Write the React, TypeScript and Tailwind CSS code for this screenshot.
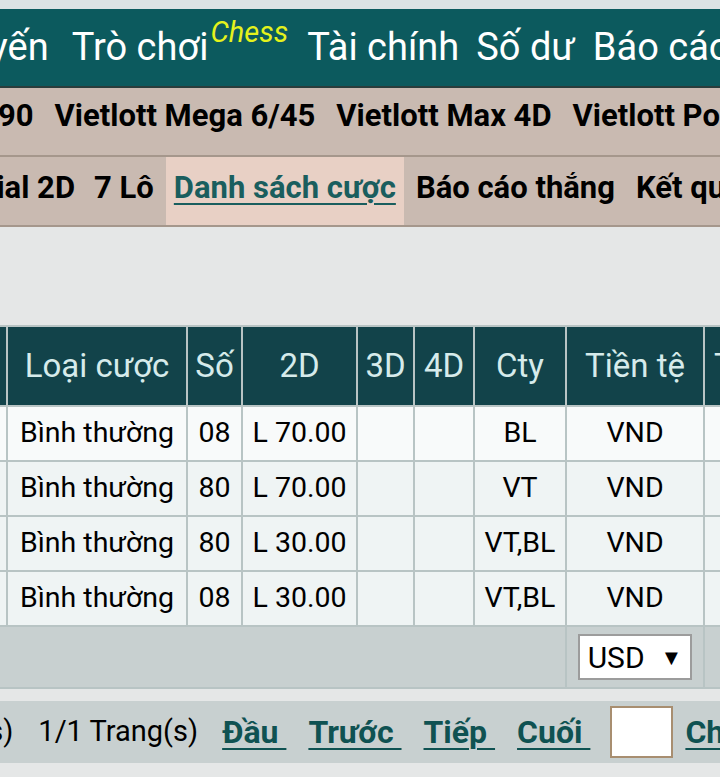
import React from "react";

const rows = [
  { type: "Bình thường", num: "08", d2: "L 70.00", cty: "BL", cur: "VND" },
  { type: "Bình thường", num: "80", d2: "L 70.00", cty: "VT", cur: "VND" },
  { type: "Bình thường", num: "80", d2: "L 30.00", cty: "VT,BL", cur: "VND" },
  { type: "Bình thường", num: "08", d2: "L 30.00", cty: "VT,BL", cur: "VND" },
];

const cell = "border-2 border-[#b8c4c4] text-center p-0 whitespace-nowrap";
const head = cell + " font-normal";
const link = "font-bold text-[#0f5252] text-[32px] underline decoration-2 underline-offset-[5px]";

export default function App() {
  return (
    <div
      className="w-[720px] h-[777px] overflow-hidden bg-[#e5e7e7] text-black"
      style={{ fontFamily: "Roboto, 'Noto Sans', sans-serif" }}
    >
      <div className="h-[9px] bg-[#dce3e4]" />
      {/* main menu */}
      <nav className="h-[79px] bg-[#0c5a5e] border-b-2 border-[#2a3d3c] flex items-center whitespace-nowrap text-white text-[38px] overflow-hidden">
        <span className="ml-[-52px]">Tuyến</span>
        <span className="ml-[23px]">
          Trò chơi
          <span className="relative top-[-18px] ml-[2px] text-[#e5f21c] italic text-[29px]">Chess</span>
        </span>
        <span className="ml-[19px]">Tài chính</span>
        <span className="ml-[17px]">Số dư</span>
        <span className="ml-[18px]">Báo cáo</span>
      </nav>
      {/* lottery types */}
      <div className="h-[69px] pb-[10px] bg-[#c9bab1] border-b-2 border-[#a5978c] flex items-center whitespace-nowrap font-bold text-[31px] gap-[21px] overflow-hidden">
        <span className="ml-[-110px]">Keno 1/90</span>
        <span>Vietlott Mega 6/45</span>
        <span>Vietlott Max 4D</span>
        <span>Vietlott Power 6/55</span>
      </div>
      {/* sub menu */}
      <div className="h-[70px] bg-[#c9bab1] border-b-2 border-[#a5978c] flex items-stretch whitespace-nowrap font-bold text-[31px] overflow-hidden">
        <span className="flex items-center pb-[6px] ml-[-73px]">Special 2D</span>
        <span className="flex items-center pb-[6px] ml-[19px]">7 Lô</span>
        <span className="flex items-center pb-[6px] ml-[12px] px-[8px] bg-[#e8d0c5] text-[#1a5e5e] underline decoration-2 underline-offset-[5px]">
          Danh sách cược
        </span>
        <span className="flex items-center pb-[6px] ml-[12px]">Báo cáo thắng</span>
        <span className="flex items-center pb-[6px] ml-[21px]">Kết quả</span>
      </div>

      <div className="h-[98px]" />

      {/* bet table */}
      <div className="overflow-hidden">
        <table className="table-fixed border-collapse ml-[-54px] w-[900px]">
          <colgroup>
            <col className="w-[60px]" />
            <col className="w-[180px]" />
            <col className="w-[55px]" />
            <col className="w-[115px]" />
            <col className="w-[57px]" />
            <col className="w-[60px]" />
            <col className="w-[92px]" />
            <col className="w-[138px]" />
            <col className="w-[143px]" />
          </colgroup>
          <thead>
            <tr className="h-[80px] bg-[#12434a] text-[#d6ebeb] text-[33px]">
              <th className={head}>#</th>
              <th className={head}>Loại cược</th>
              <th className={head}>Số</th>
              <th className={head}>2D</th>
              <th className={head}>3D</th>
              <th className={head}>4D</th>
              <th className={head}>Cty</th>
              <th className={head}>Tiền tệ</th>
              <th className={head + " text-left pl-[9px]"}>Tiền cược</th>
            </tr>
          </thead>
          <tbody className="text-[28.5px]">
            {rows.map((r, i) => (
              <tr key={i} className={"h-[55px] " + (i === 0 ? "bg-[#f8fafa]" : "bg-[#eff4f4]")}>
                <td className={cell}>{i + 1}</td>
                <td className={cell}>{r.type}</td>
                <td className={cell}>{r.num}</td>
                <td className={cell}>{r.d2}</td>
                <td className={cell}></td>
                <td className={cell}></td>
                <td className={cell}>{r.cty}</td>
                <td className={cell}>{r.cur}</td>
                <td className={cell}></td>
              </tr>
            ))}
            <tr className="h-[62px] bg-[#c8d0d0]">
              <td colSpan={7} className="border-2 border-[#b8c4c4]"></td>
              <td className={cell}>
                <div className="mx-auto w-[114px] h-[46px] bg-white border-2 border-[#9c9c9c] flex items-center justify-center gap-[16px] text-[30px]">
                  <span>USD</span>
                  <span className="text-[22px]">▼</span>
                </div>
              </td>
              <td className={cell}></td>
            </tr>
          </tbody>
        </table>
      </div>

      <div className="h-[12px]" />

      {/* pagination */}
      <div className="h-[62px] bg-[#c8d0d0] flex items-center whitespace-nowrap text-[29px] overflow-hidden">
        <span className="ml-[-113px]">1 Dòng(s)</span>
        <span className="ml-[25px]">1/1 Trang(s)</span>
        <span className={"ml-[24px] " + link}>Đầu&nbsp;</span>
        <span className={"ml-[22px] " + link}>Trước&nbsp;</span>
        <span className={"ml-[22px] " + link}>Tiếp&nbsp;</span>
        <span className={"ml-[22px] " + link}>Cuối&nbsp;</span>
        <input className="ml-[20px] shrink-0 w-[63px] h-[52px] bg-white border-2 border-[#a88e70] outline-none" />
        <span className={"ml-[12px] " + link}>Chuyển</span>
      </div>
    </div>
  );
}
